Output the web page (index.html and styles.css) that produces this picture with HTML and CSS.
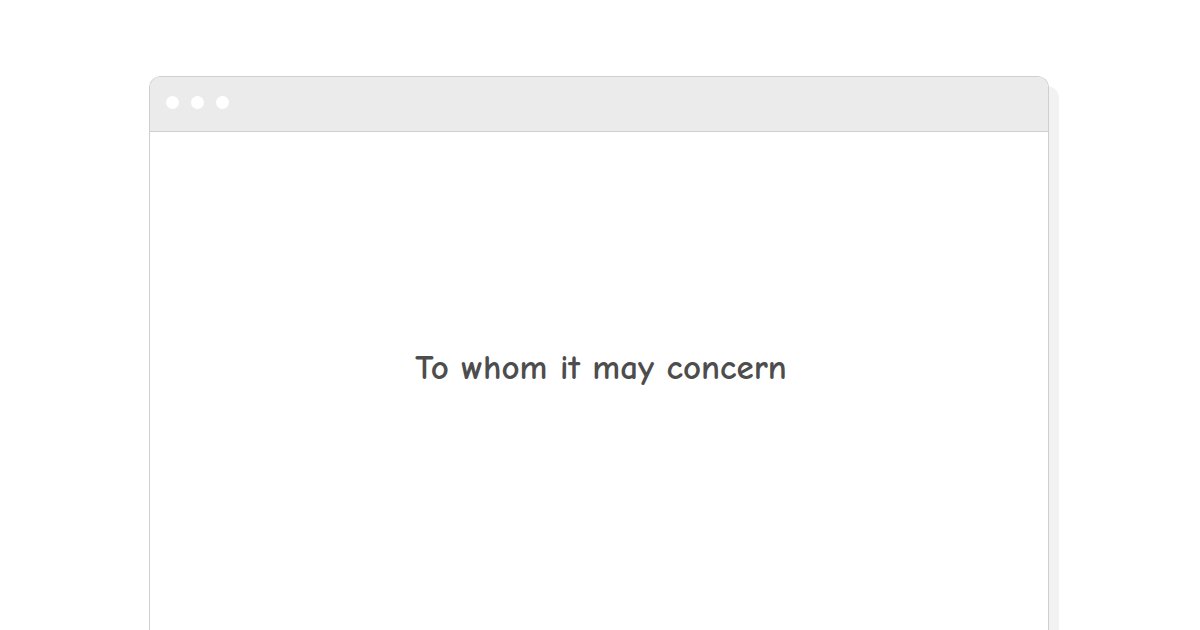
FILE: index.html
```html
<!DOCTYPE html>
<html>
<head>
<meta charset="utf-8">
<link rel="stylesheet" href="styles.css">
</head>
<body>
<div class="page">
  <div class="window">
    <div class="titlebar">
      <span class="dot"></span>
      <span class="dot"></span>
      <span class="dot"></span>
    </div>
    <div class="content">
      <p class="message">To whom it may concern</p>
    </div>
  </div>
</div>
</body>
</html>
```

FILE: styles.css
```css
html, body {
  margin: 0;
  padding: 0;
  background: #ffffff;
  overflow: hidden;
}

.page {
  width: 1200px;
  height: 630px;
  padding: 76px 0 0 149px;
  box-sizing: border-box;
  overflow: hidden;
}

.window {
  width: 900px;
  height: 554px;
  box-sizing: border-box;
  border: 1px solid #cfcfcf;
  border-bottom: none;
  border-radius: 12px 12px 0 0;
  background: #ffffff;
  box-shadow: 10px 10px 0 #f2f2f2;
  display: flex;
  flex-direction: column;
}

.titlebar {
  height: 55px;
  box-sizing: border-box;
  background: #ebebeb;
  border-bottom: 1px solid #cfcfcf;
  border-radius: 11px 11px 0 0;
  display: flex;
  align-items: center;
  gap: 12px;
  padding: 0 0 3px 16px;
}

.dot {
  width: 13px;
  height: 13px;
  border-radius: 50%;
  background: #ffffff;
}

.content {
  flex: 1;
  display: flex;
  justify-content: center;
  padding: 214px 0 0 4px;
}

.message {
  margin: 0;
  font-family: "Comic Sans MS", "Comic Neue", "DejaVu Sans", sans-serif;
  font-size: 35px;
  font-weight: 700;
  line-height: 44px;
  color: #4d4d4d;
}
```
